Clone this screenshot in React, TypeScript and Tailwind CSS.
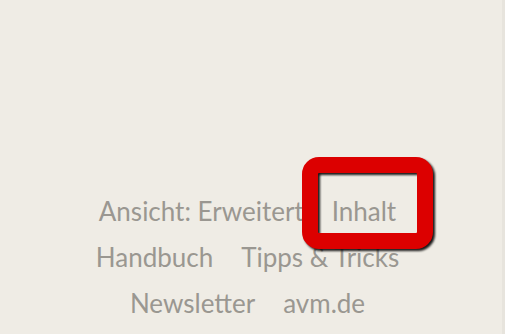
const rows: string[][] = [
  ["Ansicht: Erweitert", "Inhalt"],
  ["Handbuch", "Tipps & Tricks"],
  ["Newsletter", "avm.de"],
];

export default function App() {
  return (
    <div className="relative h-[334px] w-[505px] overflow-hidden bg-[#efece5] font-['Lato',sans-serif]">
      {/* right edge strip */}
      <div className="absolute right-0 top-0 h-full w-[3px] bg-[#e7e4dd]" />

      <div className="flex h-full flex-col items-center pr-[10px] pt-[188px] text-[26px] leading-[46px] text-[#9a9791]">
        {rows.map((row) => (
          <div key={row[0]} className="flex gap-7">
            {row.map((label) => (
              <span key={label}>{label}</span>
            ))}
          </div>
        ))}
      </div>

      {/* highlight around "Inhalt" */}
      <div className="absolute left-[302px] top-[157px] h-[92px] w-[131px] rounded-[17px] border-[16px] border-[#dc0000] drop-shadow-[2px_2px_1px_rgba(0,0,0,0.9)]" />
    </div>
  );
}
